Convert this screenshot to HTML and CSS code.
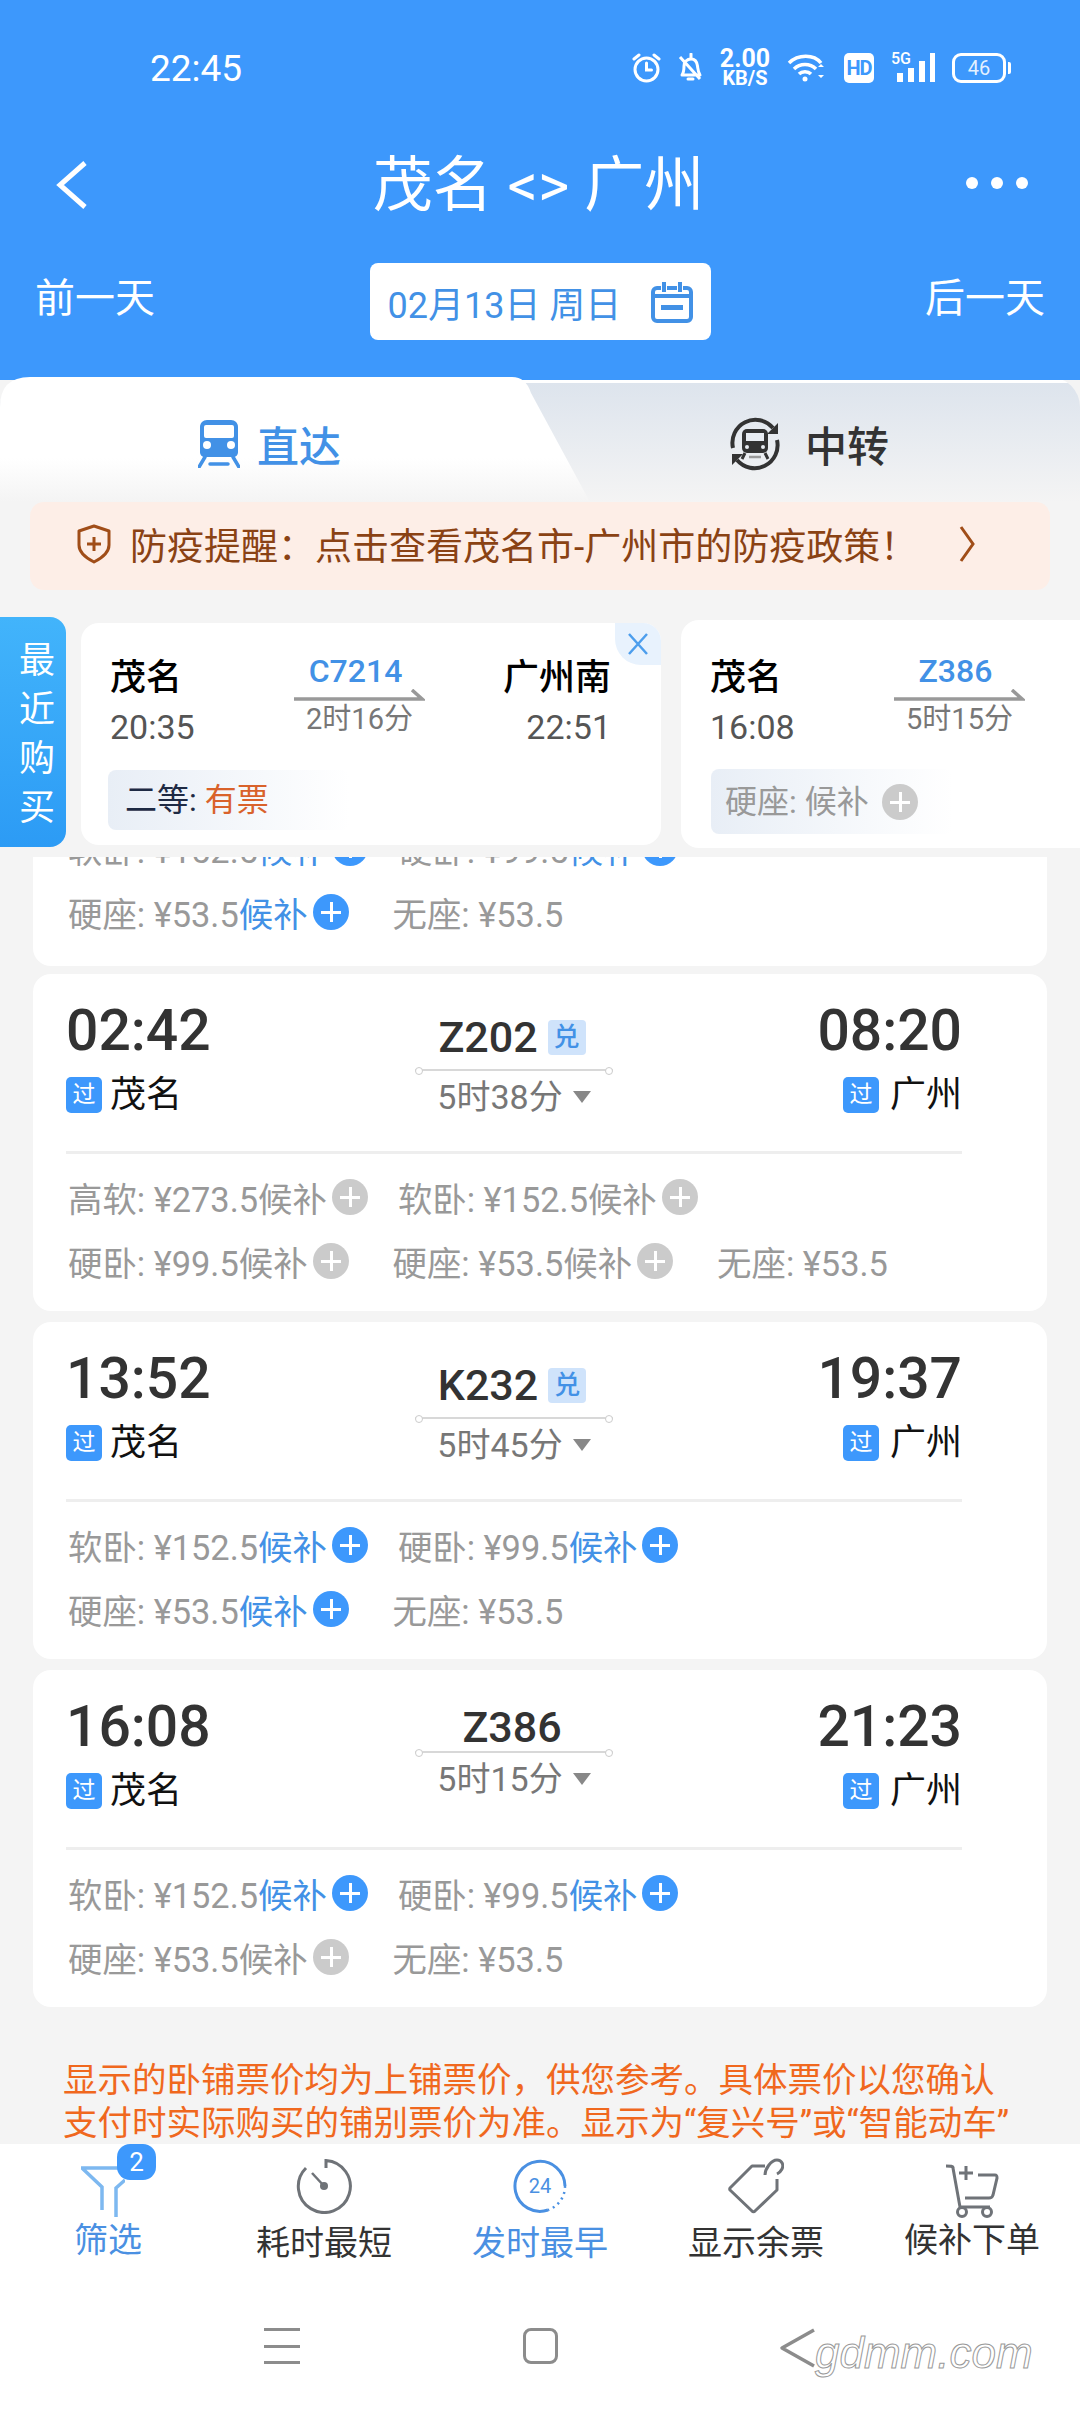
FILE: index.html
```html
<!DOCTYPE html>
<html lang="zh-CN">
<head>
    <meta charset="UTF-8">
    <meta name="viewport" content="width=device-width, initial-scale=1.0">
    <title>茂名 - 广州</title>
    <link rel="stylesheet" href="styles.css">
</head>
<body>
    <header class="header">
        <div class="status-bar">
            <span class="clock">22:45</span>
            <div class="status-icons">
                <svg width="29" height="30" viewBox="0 0 29 30" fill="none" stroke="#fff" stroke-width="3"><circle cx="14.5" cy="16.5" r="11.5"/><path d="M14.5 10v7h5M2 6l5-4M27 6l-5-4" stroke-linecap="round"/></svg>
                <svg width="25" height="30" viewBox="0 0 25 30" fill="none" stroke="#fff" stroke-width="3"><path d="M4 22c2-3 2-5 2-9 0-4 3-7 7-7s6 3 6.500 7c.5 4 .5 6 2.500 9zM2 4l20 22" stroke-linejoin="round"/><path d="M13 1v4M10 26h5" stroke-linecap="round"/></svg>
                <div class="speed"><span class="speed-num">2.00</span><span class="speed-unit">KB/S</span></div>
                <svg width="40" height="28" viewBox="0 0 40 28" fill="none" stroke="#fff" stroke-width="3.500"><path d="M2 9c9-9 25-9 32 0M7 15c6-6 16-6 22 0M12 20c3-3 9-3 12 0"/><circle cx="18" cy="25" r="2.500" fill="#fff" stroke="none"/><path d="M37 13l-3-3-3 3zM37 21l-3 3-3-3z" fill="#fff" stroke="none"/></svg>
                <div class="hd-badge">HD</div>
                <div class="signal">
                    <span class="signal-label">5G</span>
                    <svg width="38" height="29" viewBox="0 0 38 29" fill="#fff"><rect x="0" y="20" width="6" height="9"/><rect x="11" y="15" width="6" height="14"/><rect x="22" y="8" width="6" height="21"/><rect x="33" y="0" width="5" height="29"/></svg>
                </div>
                <div class="battery"><span class="battery-body">46</span><span class="battery-cap"></span></div>
            </div>
        </div>
        <div class="title-row">
            <svg class="back-icon" width="33" height="48" viewBox="0 0 33 48" fill="none" stroke="#fff" stroke-width="5"><path d="M30 2L5 24l25 22"/></svg>
            <h1 class="route-title">茂名 &lt;&gt; 广州</h1>
            <div class="more-dots"><span></span><span></span><span></span></div>
        </div>
        <div class="date-row">
            <span class="day-link">前一天</span>
            <div class="date-pill">
                <span>02月13日 周日</span>
                <svg width="42" height="42" viewBox="0 0 42 42" fill="none" stroke="#4291e6" stroke-width="4"><path d="M10 7H6a4 4 0 0 0-4 4v25a4 4 0 0 0 4 4h30a4 4 0 0 0 4-4V11a4 4 0 0 0-4-4h-4M16 7h10"/><path d="M13 1v10M29 1v10"/><path d="M2 15h38"/><rect x="10" y="24" width="22" height="5" fill="#4291e6" stroke="none"/></svg>
            </div>
            <span class="day-link day-right">后一天</span>
        </div>
    </header>

    <div class="tabs">
        <div class="tab tab-active">
            <svg width="42" height="48" viewBox="0 0 42 48"><path d="M9 0h24c4 0 7 3 7 7v25c0 3-2 5-5 5H7c-3 0-5-2-5-5V7c0-4 3-7 7-7z" fill="#4291e6"/><rect x="6" y="5" width="30" height="13" rx="2" fill="#fff"/><circle cx="9" cy="25" r="4" fill="#fff"/><circle cx="33" cy="25" r="4" fill="#fff"/><path d="M7 37L1 47M35 37l6 10M12 44h18" stroke="#4291e6" stroke-width="3.500" stroke-linecap="round" fill="none"/></svg>
            <span>直达</span>
        </div>
        <div class="tab tab-other">
            <svg width="56" height="56" viewBox="0 0 56 56" fill="none"><path d="M6 32A23 23 0 0 1 46 12M50 24A23 23 0 0 1 10 44" stroke="#333" stroke-width="4"/><path d="M51 7v11H40zM5 49V38h11z" fill="#333"/><rect x="15" y="13" width="26" height="24" rx="5" fill="#333"/><rect x="19" y="17" width="18" height="8" fill="#e8ecf2"/><circle cx="20" cy="31" r="2" fill="#e8ecf2"/><circle cx="36" cy="31" r="2" fill="#e8ecf2"/><path d="M18 37l-3 6M38 37l3 6" stroke="#333" stroke-width="3"/><path d="M22 41h12" stroke="#999" stroke-width="2.500"/></svg>
            <span>中转</span>
        </div>
    </div>

    <div class="notice">
        <svg width="36" height="40" viewBox="0 0 36 40" fill="none" stroke="#a04d18" stroke-width="3"><path d="M18 2l15 5v14c0 8-7 13-15 17C10 34 3 29 3 21V7z" stroke-linejoin="round"/><path d="M18 13v14M11 20h14" stroke-width="3"/></svg>
        <span class="notice-text">防疫提醒：点击查看茂名市-广州市的防疫政策！</span>
        <svg class="notice-arrow" width="16" height="38" viewBox="0 0 16 38" fill="none" stroke="#a04d18" stroke-width="3"><path d="M2 2l12 17L2 36"/></svg>
    </div>

    <section class="recent">
        <div class="recent-tab">最近购买</div>
        <div class="recent-card">
            <div class="recent-close">
                <svg width="22" height="22" viewBox="0 0 22 22" fill="none" stroke="#4d9eed" stroke-width="2.500"><path d="M2 1l18 20M20 1L2 21"/></svg>
            </div>
            <div class="recent-route">
                <div>
                    <div class="recent-station">茂名</div>
                    <div class="recent-time">20:35</div>
                </div>
                <div class="recent-middle">
                    <div class="recent-code">C7214</div>
                    <svg class="recent-arrow" width="131" height="12" viewBox="0 0 131 12" fill="none" stroke="#999" stroke-width="3.500"><path d="M0 10h128L118 1"/></svg>
                    <div class="recent-dur">2时16分</div>
                </div>
                <div class="recent-end">
                    <div class="recent-station">广州南</div>
                    <div class="recent-time">22:51</div>
                </div>
            </div>
            <div class="recent-seat"><span class="seat-dark">二等:</span> <span class="seat-orange">有票</span></div>
        </div>
        <div class="recent-card recent-second">
            <div class="recent-route">
                <div>
                    <div class="recent-station">茂名</div>
                    <div class="recent-time">16:08</div>
                </div>
                <div class="recent-middle">
                    <div class="recent-code">Z386</div>
                    <svg class="recent-arrow" width="131" height="12" viewBox="0 0 131 12" fill="none" stroke="#999" stroke-width="3.500"><path d="M0 10h128L118 1"/></svg>
                    <div class="recent-dur">5时15分</div>
                </div>
            </div>
            <div class="recent-seat recent-seat-gray"><span>硬座: 候补</span><i class="plus plus-gray"></i></div>
        </div>
    </section>

    <main class="content">
        <div class="train-list">
            <div class="train-card partial">
                <div class="fares fares-wide">
                    <div class="fare">软卧: ¥152.5<b>候补</b><i class="plus"></i></div>
                    <div class="fare">硬卧: ¥99.5<b>候补</b><i class="plus"></i></div>
                </div>
                <div class="fares">
                    <div class="fare">硬座: ¥53.5<b>候补</b><i class="plus"></i></div>
                    <div class="fare">无座: ¥53.5</div>
                </div>
            </div>

            <div class="train-card">
                <div class="train-top">
                    <div class="train-side">
                        <div class="train-time">02:42</div>
                        <div class="train-station"><span class="pass">过</span>茂名</div>
                    </div>
                    <div class="train-middle has-badge">
                        <div class="train-code">Z202<span class="swap">兑</span></div>
                        <div class="train-line"></div>
                        <div class="train-dur">5时38分<span class="tri"></span></div>
                    </div>
                    <div class="train-side side-right">
                        <div class="train-time">08:20</div>
                        <div class="train-station"><span class="pass">过</span>广州</div>
                    </div>
                </div>
                <div class="fares fares-wide">
                    <div class="fare">高软: ¥273.5候补<i class="plus plus-gray"></i></div>
                    <div class="fare">软卧: ¥152.5候补<i class="plus plus-gray"></i></div>
                </div>
                <div class="fares">
                    <div class="fare">硬卧: ¥99.5候补<i class="plus plus-gray"></i></div>
                    <div class="fare">硬座: ¥53.5候补<i class="plus plus-gray"></i></div>
                    <div class="fare">无座: ¥53.5</div>
                </div>
            </div>

            <div class="train-card">
                <div class="train-top">
                    <div class="train-side">
                        <div class="train-time">13:52</div>
                        <div class="train-station"><span class="pass">过</span>茂名</div>
                    </div>
                    <div class="train-middle has-badge">
                        <div class="train-code">K232<span class="swap">兑</span></div>
                        <div class="train-line"></div>
                        <div class="train-dur">5时45分<span class="tri"></span></div>
                    </div>
                    <div class="train-side side-right">
                        <div class="train-time">19:37</div>
                        <div class="train-station"><span class="pass">过</span>广州</div>
                    </div>
                </div>
                <div class="fares fares-wide">
                    <div class="fare">软卧: ¥152.5<b>候补</b><i class="plus"></i></div>
                    <div class="fare">硬卧: ¥99.5<b>候补</b><i class="plus"></i></div>
                </div>
                <div class="fares">
                    <div class="fare">硬座: ¥53.5<b>候补</b><i class="plus"></i></div>
                    <div class="fare">无座: ¥53.5</div>
                </div>
            </div>

            <div class="train-card">
                <div class="train-top">
                    <div class="train-side">
                        <div class="train-time">16:08</div>
                        <div class="train-station"><span class="pass">过</span>茂名</div>
                    </div>
                    <div class="train-middle">
                        <div class="train-code">Z386</div>
                        <div class="train-line"></div>
                        <div class="train-dur">5时15分<span class="tri"></span></div>
                    </div>
                    <div class="train-side side-right">
                        <div class="train-time">21:23</div>
                        <div class="train-station"><span class="pass">过</span>广州</div>
                    </div>
                </div>
                <div class="fares fares-wide">
                    <div class="fare">软卧: ¥152.5<b>候补</b><i class="plus"></i></div>
                    <div class="fare">硬卧: ¥99.5<b>候补</b><i class="plus"></i></div>
                </div>
                <div class="fares">
                    <div class="fare">硬座: ¥53.5候补<i class="plus plus-gray"></i></div>
                    <div class="fare">无座: ¥53.5</div>
                </div>
            </div>
        </div>
        <p class="tips">显示的卧铺票价均为上铺票价，供您参考。具体票价以您确认<br>支付时实际购买的铺别票价为准。显示为“复兴号”或“智能动车”</p>
    </main>

    <nav class="toolbar">
        <div class="tool tool-on">
            <div class="tool-icon tool-filter">
                <svg width="44" height="60" viewBox="0 0 44 60" fill="none" stroke="#7db8f0" stroke-width="3.500"><path d="M37 10H1l20 19v23M44 22l-9 8v29"/></svg>
                <span class="tool-badge">2</span>
            </div>
            <span class="tool-label label-up">筛选</span>
        </div>
        <div class="tool">
            <div class="tool-icon">
                <svg width="56" height="56" viewBox="0 0 56 56" fill="none" stroke="#6f7378" stroke-width="3"><path d="M30 10V2.500A26 26 0 1 1 10 10"/><path d="M16 15l12 13" stroke-width="2.500"/><circle cx="28" cy="28" r="4" fill="#6f7378" stroke="none"/></svg>
            </div>
            <span class="tool-label">耗时最短</span>
        </div>
        <div class="tool tool-on">
            <div class="tool-icon">
                <svg width="56" height="56" viewBox="0 0 56 56" fill="none" stroke="#4a90e2" stroke-width="3"><path d="M53 28A25 25 0 1 0 36 52"/><path d="M53 28a25 25 0 0 1-17 24" stroke-dasharray="2 4" stroke-width="2.500"/><text x="28" y="35" class="clock-num">24</text></svg>
            </div>
            <span class="tool-label">发时最早</span>
        </div>
        <div class="tool">
            <div class="tool-icon">
                <svg width="56" height="56" viewBox="0 0 56 56" fill="none" stroke="#6f7378" stroke-width="3"><path d="M37 8H24L2 30a2 2 0 0 0 0 2l22 21a2 2 0 0 0 3 0l22-21V21" stroke-linejoin="round"/><path d="M37 17c0-6 6-15 12-15 5 0 7 5 5 9-1 2-3 4-5 5"/></svg>
            </div>
            <span class="tool-label">显示余票</span>
        </div>
        <div class="tool">
            <div class="tool-icon">
                <svg width="56" height="60" viewBox="0 0 56 60" fill="none" stroke="#6f7378" stroke-width="3"><path d="M2 8c5 0 7 0 7 2l7 39h30M34 17h17c2 0 2 1 2 3l-4 17c-1 3-2 3-4 3H21"/><path d="M22 8v14M15 15h14"/><circle cx="18" cy="54" r="4.500"/><circle cx="43" cy="54" r="4.500"/></svg>
            </div>
            <span class="tool-label label-up">候补下单</span>
        </div>
    </nav>

    <div class="nav-bar">
        <div class="nav-menu"><span></span><span></span><span></span></div>
        <div class="nav-home"></div>
        <svg width="38" height="40" viewBox="0 0 38 40" fill="none" stroke="#8c8c8c" stroke-width="3.500"><path d="M35 2L3 20l32 18" stroke-linejoin="round"/></svg>
        <span class="watermark">gdmm.com</span>
    </div>
</body>
</html>
```

FILE: styles.css
```css
* {
    margin: 0;
    padding: 0;
    box-sizing: border-box;
    font-family: Roboto, "Noto Sans CJK SC", sans-serif;
}

body {
    width: 1080px;
    height: 2412px;
    display: flex;
    flex-direction: column;
    overflow: hidden;
    background: #f4f4f4;
}

/* header */

.header {
    height: 380px;
    flex-shrink: 0;
    background: #3d98fc;
    color: #fff;
}

.status-bar {
    height: 136px;
    display: flex;
    align-items: center;
    padding: 0 69px 0 150px;
}

.clock {
    font-size: 37px;
}

.status-icons {
    margin-left: auto;
    display: flex;
    align-items: center;
    gap: 17px;
}

.speed {
    display: flex;
    flex-direction: column;
    align-items: center;
    font-weight: 700;
    width: 50px;
}

.speed-num {
    font-size: 25px;
    line-height: 20px;
}

.speed-unit {
    font-size: 20px;
    line-height: 18px;
}

.hd-badge {
    width: 30px;
    height: 30px;
    background: #fff;
    border-radius: 5px;
    color: #3d98fc;
    font-size: 20px;
    font-weight: 700;
    line-height: 30px;
    text-align: center;
    letter-spacing: -1px;
}

.signal {
    position: relative;
    width: 44px;
    height: 30px;
    display: flex;
    justify-content: flex-end;
}

.signal-label {
    position: absolute;
    left: 0;
    top: -3px;
    font-size: 16px;
    line-height: 18px;
    font-weight: 500;
}

.battery {
    display: flex;
    align-items: center;
    gap: 2px;
}

.battery-body {
    width: 54px;
    height: 30px;
    border: 3px solid #fff;
    border-radius: 9px;
    font-size: 20px;
    line-height: 24px;
    text-align: center;
    color: #e3f0ff;
}

.battery-cap {
    width: 3px;
    height: 12px;
    background: #fff;
    border-radius: 0 2px 2px 0;
}

.title-row {
    height: 98px;
    display: grid;
    grid-template-columns: 1fr auto 1fr;
    align-items: center;
    padding: 0 52px 0 49px;
}

.back-icon {
    margin-left: 6px;
}

.route-title {
    font-size: 60px;
    font-weight: 400;
    margin-top: -12px;
}

.more-dots {
    justify-self: end;
    display: flex;
    gap: 13px;
    margin-top: -4px;
}

.more-dots span {
    width: 12px;
    height: 12px;
    background: #fff;
    border-radius: 50%;
}

.date-row {
    margin-top: 29px;
    height: 77px;
    display: grid;
    grid-template-columns: 1fr auto 1fr;
    align-items: center;
    padding: 0 35px;
}

.day-link {
    font-size: 40px;
    margin-top: -13px;
}

.day-right {
    text-align: right;
}

.date-pill {
    width: 341px;
    height: 77px;
    background: #fff;
    border-radius: 8px;
    display: flex;
    align-items: center;
    justify-content: space-between;
    padding: 0 18px;
    color: #4291e6;
    font-size: 36px;
}

/* tabs */

.tabs {
    height: 125px;
    flex-shrink: 0;
    display: flex;
    margin-top: -3px;
    background: linear-gradient(#3d98fc 3px, #fff 3px, #fff 6px, #dde4ed 6px, #f4f4f4 100%);
    border-radius: 30px 30px 0 0;
}

.tab {
    display: flex;
    align-items: center;
    font-size: 42px;
    font-weight: 500;
    padding-top: 8px;
}

.tab-active {
    width: 590px;
    padding-left: 198px;
    gap: 17px;
    color: #4291e6;
    background: linear-gradient(#fff 65%, #f4f4f4 100%);
    clip-path: path("M0 125V30Q0 0 30 0H512Q526 0 531 16L590 125Z");
}

.tab-other {
    flex: 1;
    padding-left: 137px;
    gap: 22px;
    color: #333;
}

.notice {
    height: 88px;
    flex-shrink: 0;
    margin: 0 30px;
    padding: 0 75px 4px 46px;
    background: #fdeee7;
    border-radius: 14px;
    display: flex;
    align-items: center;
    color: #8a4214;
    font-size: 37px;
}

.notice-text {
    margin-left: 18px;
}

.notice-arrow {
    margin-left: auto;
}

/* recently bought */

.recent {
    margin-top: 27px;
    height: 231px;
    flex-shrink: 0;
    display: flex;
    align-items: flex-start;
    overflow: hidden;
}

.recent-tab {
    width: 66px;
    height: 230px;
    flex-shrink: 0;
    background: linear-gradient(#42b4fb, #2c9bf5);
    border-radius: 0 16px 16px 0;
    color: #fff;
    font-size: 36px;
    writing-mode: vertical-rl;
    text-orientation: upright;
    letter-spacing: 13px;
    line-height: 66px;
    padding-top: 24px;
}

.recent-card {
    position: relative;
    width: 580px;
    height: 222px;
    flex-shrink: 0;
    margin: 6px 0 0 15px;
    padding: 33px 50px 0 29px;
    background: #fff;
    border-radius: 18px;
    overflow: hidden;
}

.recent-second {
    width: 420px;
    height: 228px;
    margin: 3px 0 0 20px;
    padding-top: 36px;
    border-radius: 18px 0 0 18px;
}

.recent-close {
    position: absolute;
    right: 0;
    top: 0;
    width: 46px;
    height: 42px;
    background: #e8f2fd;
    border-radius: 0 0 0 26px;
    display: flex;
    align-items: center;
    justify-content: center;
}

.recent-route {
    display: grid;
    grid-template-columns: 184px 131px 1fr;
}

.recent-station {
    font-size: 36px;
    font-weight: 500;
    line-height: 44px;
    color: #000;
}

.recent-time {
    margin-top: 7px;
    font-size: 34px;
    line-height: 40px;
    color: #555;
}

.recent-end {
    text-align: right;
}

.recent-middle {
    margin-top: -3px;
    text-align: center;
}

.recent-code {
    padding-right: 8px;
    font-size: 32px;
    font-weight: 500;
    line-height: 36px;
    color: #4291e6;
}

.recent-arrow {
    display: block;
}

.recent-dur {
    font-size: 29px;
    line-height: 36px;
    color: #777;
}

.recent-seat {
    width: 242px;
    height: 60px;
    margin: 23px 0 0 -2px;
    padding-left: 17px;
    background: linear-gradient(to right, #e8eef6, #fff);
    border-radius: 8px;
    font-size: 32px;
    line-height: 60px;
}

.seat-dark {
    color: #1e2a44;
}

.seat-orange {
    color: #d9622b;
}

.recent-seat-gray {
    height: 65px;
    margin: 22px 0 0 1px;
    padding-left: 14px;
    display: flex;
    align-items: center;
    gap: 8px;
    color: #999;
}

/* trains */

.content {
    flex: 1;
    min-height: 0;
    margin-top: 9px;
    overflow: hidden;
}

.train-list {
    margin: 0 33px;
}

.train-card {
    height: 337px;
    margin-top: 11px;
    padding: 27px 85px 0 33px;
    background: #fff;
    border-radius: 18px;
}

.partial {
    height: auto;
    margin-top: -29px;
    padding: 0 85px 34px 33px;
}

.partial .fares:first-child {
    margin-top: 0;
}

.partial + .train-card {
    margin-top: 8px;
}

.train-top {
    height: 153px;
    display: grid;
    grid-template-columns: 1fr 198px 1fr;
    border-bottom: 3px solid #eee;
}

.train-top + .fares {
    margin-top: 23px;
}

.train-time {
    font-size: 57px;
    font-weight: 500;
    line-height: 60px;
    color: #333;
}

.train-station {
    margin-top: 10px;
    height: 40px;
    display: flex;
    align-items: center;
    gap: 8px;
    font-size: 36px;
    color: #111;
}

.side-right {
    display: flex;
    flex-direction: column;
    align-items: flex-end;
}

.side-right .train-station {
    gap: 11px;
}

.pass {
    width: 36px;
    height: 36px;
    background: #3d98fc;
    border-radius: 5px;
    color: #fff;
    font-size: 23px;
    line-height: 36px;
    text-align: center;
    margin-top: 8px;
}

.train-middle {
    padding-top: 8px;
    display: flex;
    flex-direction: column;
    align-items: center;
}

.train-middle.has-badge {
    padding-top: 14px;
}

.train-code {
    height: 44px;
    padding-right: 4px;
    display: flex;
    align-items: center;
    font-size: 43px;
    font-weight: 500;
    color: #333;
}

.swap {
    width: 38px;
    height: 35px;
    margin-left: 10px;
    background: #cfe3fb;
    border-radius: 4px;
    color: #4291e6;
    font-size: 26px;
    font-weight: 500;
    line-height: 35px;
    text-align: center;
}

.train-line {
    position: relative;
    width: 198px;
    height: 2px;
    margin-top: 2px;
    background: #d8d8d8;
}

.has-badge .train-line {
    margin-top: 10px;
}

.train-line::before,
.train-line::after {
    content: '';
    position: absolute;
    top: -2px;
    width: 6px;
    height: 6px;
    background: #fff;
    border: 1px solid #ccc;
    border-radius: 50%;
}

.train-line::before {
    left: 0;
}

.train-line::after {
    right: 0;
}

.train-dur {
    margin-top: 3px;
    height: 40px;
    display: flex;
    align-items: center;
    font-size: 34px;
    color: #777;
}

.tri {
    margin: 6px 0 0 10px;
    border-left: 9px solid transparent;
    border-right: 9px solid transparent;
    border-top: 12px solid #888;
}

/* fares */

.fares {
    height: 40px;
    margin-top: 24px;
    margin-left: 2px;
    display: flex;
    gap: 44px;
}

.fares-wide {
    gap: 30px;
}

.fare {
    display: flex;
    align-items: center;
    font-size: 34.400px;
    color: #999;
    white-space: pre;
}

.fare b {
    font-weight: 400;
    color: #4291e6;
}

.plus {
    position: relative;
    width: 36px;
    height: 36px;
    margin-left: 5px;
    flex-shrink: 0;
    background: #3d98fc;
    border-radius: 50%;
}

.plus-gray {
    background: #cbcbcb;
}

.plus::before,
.plus::after {
    content: '';
    position: absolute;
    background: #fff;
    left: 8px;
    top: 17px;
    width: 20px;
    height: 3px;
}

.plus::after {
    left: 17px;
    top: 8px;
    width: 3px;
    height: 20px;
}

.tips {
    margin-top: 52px;
    padding-left: 63px;
    font-size: 34.500px;
    line-height: 43px;
    color: #f0681e;
    white-space: nowrap;
}

/* bottom */

.toolbar {
    height: 156px;
    flex-shrink: 0;
    display: grid;
    grid-template-columns: repeat(5, 216px);
    background: #fff;
}

.tool {
    display: flex;
    flex-direction: column;
    align-items: center;
    padding-top: 14px;
    color: #333;
}

.tool-on {
    color: #4a90e2;
}

.tool-icon {
    position: relative;
    height: 63px;
}

.tool-filter {
    margin-right: 10px;
}

.tool-badge {
    position: absolute;
    left: 36px;
    top: -14px;
    width: 39px;
    height: 36px;
    background: #3d98fc;
    border-radius: 13px;
    color: #fff;
    font-size: 26px;
    line-height: 36px;
    text-align: center;
}

.tool-label {
    font-size: 34px;
    line-height: 44px;
}

.label-up {
    margin-top: -3px;
}

.clock-num {
    font-size: 20px;
    fill: #4a90e2;
    stroke: none;
    text-anchor: middle;
}

.nav-bar {
    position: relative;
    height: 112px;
    flex-shrink: 0;
    display: grid;
    grid-template-columns: repeat(3, 258px);
    justify-content: center;
    justify-items: center;
    padding-top: 28px;
    align-content: start;
    background: #fff;
}

.nav-menu {
    width: 36px;
    height: 36px;
    display: flex;
    flex-direction: column;
    justify-content: space-between;
}

.nav-menu span {
    height: 3px;
    background: #8c8c8c;
}

.nav-home {
    width: 35px;
    height: 36px;
    border: 3px solid #8c8c8c;
    border-radius: 8px;
}

.watermark {
    position: absolute;
    left: 815px;
    top: 28px;
    font-family: "Liberation Sans", sans-serif;
    font-size: 44px;
    font-style: italic;
    line-height: 50px;
    color: #fff;
    -webkit-text-stroke: 1px #999;
}
```
